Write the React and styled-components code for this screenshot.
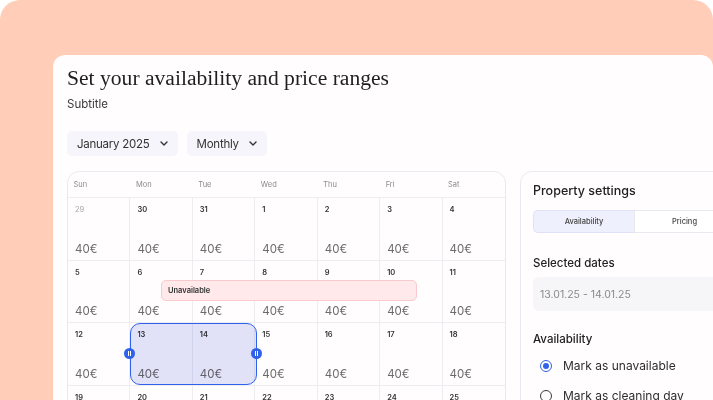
import React from 'react';
import styled, { createGlobalStyle } from 'styled-components';

const GlobalStyle = createGlobalStyle`
  html, body { margin: 0; padding: 0; background: #ffffff; }
  body { font-family: Inter, "Noto Sans", sans-serif; color: #2b2b2b; }
  * { box-sizing: border-box; }
`;

const Frame = styled.div`
  width: 713px;
  height: 400px;
  background: #ffcdb8;
  border-radius: 20px 20px 0 0;
  overflow: hidden;
  padding: 55px 0 0 53px;
`;

const Card = styled.div`
  width: 660px;
  height: 345px;
  background: #fffdfd;
  border-radius: 12px 12px 0 0;
  overflow: hidden;
  padding: 9px 0 0 14px;
`;

const Title = styled.h1`
  margin: 0;
  font-family: "Liberation Serif", "DejaVu Serif", serif;
  font-weight: 400;
  font-size: 21.6px;
  line-height: 28px;
  color: #1f1f1f;
`;

const Subtitle = styled.div`
  margin-top: 5px;
  font-size: 11.5px;
  line-height: 14px;
  color: #3a3a3a;
`;

const Controls = styled.div`
  display: flex;
  gap: 9px;
  margin-top: 20px;
`;

const Dropdown = styled.button`
  display: flex;
  align-items: center;
  gap: 10px;
  height: 25px;
  padding: 0 10px;
  border: none;
  border-radius: 5px;
  background: #f5f5fb;
  font-family: Inter, sans-serif;
  font-size: 11.5px;
  letter-spacing: -0.25px;
  color: #333;
`;

const Main = styled.div`
  display: flex;
  gap: 14px;
  margin-top: 15px;
  align-items: flex-start;
`;

const Calendar = styled.div`
  position: relative;
  width: 439px;
  flex: none;
  border: 1px solid #e9e9ef;
  border-radius: 12px;
  height: 260px;
  overflow: hidden;
`;

const WeekHeader = styled.div`
  display: grid;
  grid-template-columns: repeat(7, 1fr);
  height: 26px;
  border-bottom: 1px solid #ededf2;
`;

const DayName = styled.div`
  display: flex;
  align-items: center;
  padding-left: 5.5px;
  font-size: 7.5px;
  color: #8c8c8c;
`;

const Grid = styled.div`
  display: grid;
  grid-template-columns: repeat(7, 1fr);
  grid-auto-rows: 62.6px;
`;

const Cell = styled.div`
  display: flex;
  flex-direction: column;
  justify-content: space-between;
  padding: 7px 6px 4px 7px;
  border-right: ${p => (p.$last ? 'none' : '1px solid #ececf1')};
  border-bottom: 1px solid #ececf1;
`;

const DayNum = styled.span`
  font-size: 7.5px;
  line-height: 10px;
  font-weight: ${p => (p.$muted ? 400 : 600)};
  color: ${p => (p.$muted ? '#a9a9a9' : '#333')};
`;

const Price = styled.span`
  font-size: 11.5px;
  line-height: 14px;
  color: #6b6b6b;
`;

const UnavailableBar = styled.div`
  position: absolute;
  left: 93px;
  top: 108px;
  width: 256px;
  height: 21px;
  display: flex;
  align-items: center;
  padding-left: 6px;
  background: #ffe9ea;
  border: 1px solid #f8cacd;
  border-radius: 5px;
  font-size: 7.5px;
  font-weight: 600;
  color: #333;
`;

const Selection = styled.div`
  position: absolute;
  left: 61.5px;
  top: 150.5px;
  width: 127px;
  height: 62.5px;
  border: 1.5px solid #2f61eb;
  border-radius: 10px;
  &::before {
    content: '';
    position: absolute;
    inset: 0;
    border-radius: 8px;
    background: #e1e4fa;
    mix-blend-mode: multiply;
  }
`;

const Handle = styled.div`
  position: absolute;
  top: 50%;
  ${p => (p.$side === 'left' ? 'left: -6.5px;' : 'right: -6.5px;')}
  width: 11px;
  height: 11px;
  margin-top: -5.5px;
  border-radius: 50%;
  background: #2f61eb;
  display: flex;
  align-items: center;
  justify-content: center;
  gap: 1.5px;
  &::before, &::after {
    content: '';
    width: 1px;
    height: 5px;
    background: #ffffff;
  }
`;

const Panel = styled.div`
  width: 240px;
  flex: none;
  height: 260px;
  border: 1px solid #e9e9ef;
  border-radius: 12px;
  padding: 11px 0 0 12px;
`;

const PanelTitle = styled.div`
  font-size: 12.5px;
  font-weight: 500;
  line-height: 16px;
  color: #222;
`;

const Segmented = styled.div`
  display: flex;
  margin-top: 11px;
  height: 23px;
`;

const Tab = styled.div`
  width: 101px;
  flex: none;
  display: flex;
  align-items: center;
  justify-content: center;
  font-size: 7.5px;
  font-weight: 500;
  color: #444;
  background: ${p => (p.$active ? '#eef0fd' : '#ffffff')};
  border: 1px solid ${p => (p.$active ? '#dfe2f6' : '#e8e8ee')};
  border-radius: ${p => (p.$active ? '5px 0 0 5px' : '0')};
  ${p => (p.$active ? 'border-right: none;' : '')}
`;

const SectionLabel = styled.div`
  margin-top: ${p => p.$mt}px;
  font-size: 11.5px;
  font-weight: 500;
  line-height: 14px;
  color: #222;
`;

const DateField = styled.div`
  margin-top: 7px;
  height: 34px;
  display: flex;
  align-items: center;
  padding-left: 7px;
  background: #f6f6f8;
  border-radius: 6px;
  font-size: 10.5px;
  color: #8a8a8a;
`;

const RadioList = styled.div`
  display: flex;
  flex-direction: column;
  gap: 14px;
  margin-top: 12px;
  padding-left: 7px;
`;

const RadioRow = styled.div`
  display: flex;
  align-items: center;
  gap: 11px;
  font-size: 12px;
  line-height: 16px;
  color: #2e2e2e;
`;

const RadioDot = styled.span`
  width: 12px;
  height: 12px;
  flex: none;
  border-radius: 50%;
  border: 1.5px solid ${p => (p.$checked ? '#2f61eb' : '#3a3a3a')};
  display: flex;
  align-items: center;
  justify-content: center;
  &::after {
    content: '';
    width: 6px;
    height: 6px;
    border-radius: 50%;
    background: ${p => (p.$checked ? '#2f61eb' : 'transparent')};
  }
`;

const Chevron = () => (
  <svg width="8" height="5" viewBox="0 0 8 5" fill="none">
    <path d="M1 1l3 3 3-3" stroke="#333" strokeWidth="1.4" strokeLinecap="round" strokeLinejoin="round" />
  </svg>
);

const dayNames = ['Sun', 'Mon', 'Tue', 'Wed', 'Thu', 'Fri', 'Sat'];
const days = [
  [29, true], [30], [31], [1], [2], [3], [4],
  [5], [6], [7], [8], [9], [10], [11],
  [12], [13], [14], [15], [16], [17], [18],
  [19], [20], [21], [22], [23], [24], [25],
];

export default function App() {
  return (
    <>
      <GlobalStyle />
      <Frame>
        <Card>
          <Title>Set your availability and price ranges</Title>
          <Subtitle>Subtitle</Subtitle>
          <Controls>
            <Dropdown>January 2025 <Chevron /></Dropdown>
            <Dropdown>Monthly <Chevron /></Dropdown>
          </Controls>
          <Main>
            <Calendar>
              <WeekHeader>
                {dayNames.map(d => <DayName key={d}>{d}</DayName>)}
              </WeekHeader>
              <Grid>
                {days.map(([n, muted], i) => (
                  <Cell key={i} $last={i % 7 === 6}>
                    <DayNum $muted={muted}>{n}</DayNum>
                    <Price>40€</Price>
                  </Cell>
                ))}
              </Grid>
              <UnavailableBar>Unavailable</UnavailableBar>
              <Selection>
                <Handle $side="left" />
                <Handle $side="right" />
              </Selection>
            </Calendar>
            <Panel>
              <PanelTitle>Property settings</PanelTitle>
              <Segmented>
                <Tab $active>Availability</Tab>
                <Tab>Pricing</Tab>
              </Segmented>
              <SectionLabel $mt={23}>Selected dates</SectionLabel>
              <DateField>13.01.25 - 14.01.25</DateField>
              <SectionLabel $mt={21}>Availability</SectionLabel>
              <RadioList>
                <RadioRow><RadioDot $checked />Mark as unavailable</RadioRow>
                <RadioRow><RadioDot />Mark as cleaning day</RadioRow>
              </RadioList>
            </Panel>
          </Main>
        </Card>
      </Frame>
    </>
  );
}
